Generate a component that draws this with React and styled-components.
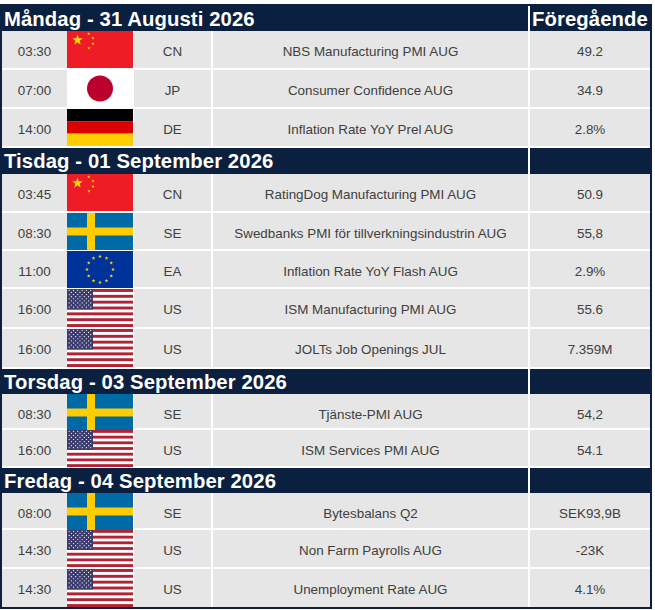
import React from 'react';
import styled, { createGlobalStyle } from 'styled-components';

const NAVY = '#0b1f3f';

const GlobalStyle = createGlobalStyle`
  body {
    margin: 0;
    background: #fff;
    font-family: "Liberation Sans", Arial, Helvetica, sans-serif;
  }
`;

const Page = styled.div`
  padding-top: 4px;
  width: 652px;
`;

const Table = styled.div`
  border: 2px solid ${NAVY};
  background: ${NAVY};
`;

const Section = styled.div`
  display: flex;
  flex-direction: column;

  &:last-child > div:last-child {
    border-bottom: 0;
  }
`;

const Header = styled.div`
  display: grid;
  grid-template-columns: 528px 120px;
  height: ${(p) => p.$h}px;
  background: ${NAVY};
  color: #fff;
  font-weight: bold;
  font-size: 20.3px;
  letter-spacing: 0.1px;
`;

const HeaderCell = styled.div`
  display: flex;
  align-items: center;
  padding: 1px 0 0 2px;
  border-right: ${(p) => (p.$divider ? '2px solid #fff' : '0')};
  white-space: nowrap;
`;

const Row = styled.div`
  display: grid;
  grid-template-columns: 65px 67px 79px 317px 120px;
  height: ${(p) => p.$h}px;
  box-sizing: border-box;
  border-bottom: 2px solid #fff;
  background: #e6e6e6;
  color: #404040;
  font-size: 13.4px;
`;

const Cell = styled.div`
  display: flex;
  align-items: center;
  justify-content: center;
  padding-top: 3px;
  border-right: ${(p) => p.$divider || 0}px solid #fff;
  white-space: nowrap;
`;

const FlagCell = styled.div`
  display: flex;
  border-right: 1px solid #fff;

  svg {
    display: block;
    width: 100%;
    height: 100%;
  }
`;

const star = (cx, cy, r) => {
  const pts = [];
  for (let i = 0; i < 10; i++) {
    const rad = i % 2 === 0 ? r : r * 0.4;
    const a = -Math.PI / 2 + (i * Math.PI) / 5;
    pts.push(`${(cx + rad * Math.cos(a)).toFixed(2)},${(cy + rad * Math.sin(a)).toFixed(2)}`);
  }
  return pts.join(' ');
};

const Svg = ({ children }) => (
  <svg viewBox="0 0 66 37" preserveAspectRatio="none">
    {children}
  </svg>
);

const flags = {
  CN: () => (
    <Svg>
      <rect width="66" height="37" fill="#ee1c25" />
      <polygon points={star(10.5, 9, 5.5)} fill="#ffde00" />
      <polygon points={star(21.7, 2.9, 1.7)} fill="#ffde00" />
      <polygon points={star(26, 7, 1.7)} fill="#ffde00" />
      <polygon points={star(26, 12.5, 1.7)} fill="#ffde00" />
      <polygon points={star(22, 17, 1.7)} fill="#ffde00" />
    </Svg>
  ),
  JP: () => (
    <Svg>
      <rect width="66" height="37" fill="#fff" />
      <circle cx="33" cy="18.5" r="13" fill="#bc002d" />
    </Svg>
  ),
  DE: () => (
    <Svg>
      <rect width="66" height="12.4" fill="#000" />
      <rect y="12.3" width="66" height="12.4" fill="#dd0000" />
      <rect y="24.6" width="66" height="12.4" fill="#ffce00" />
    </Svg>
  ),
  SE: () => (
    <Svg>
      <rect width="66" height="37" fill="#006aa7" />
      <rect x="20" width="8" height="37" fill="#fecc00" />
      <rect y="14.5" width="66" height="8" fill="#fecc00" />
    </Svg>
  ),
  EA: () => (
    <Svg>
      <rect width="66" height="37" fill="#003399" />
      {Array.from({ length: 12 }).map((_, i) => {
        const a = (i * Math.PI) / 6;
        return (
          <polygon
            key={i}
            points={star(33 + 13 * Math.sin(a), 18.5 - 13 * Math.cos(a), 2)}
            fill="#ffcc00"
          />
        );
      })}
    </Svg>
  ),
  US: () => {
    const sh = 37 / 13;
    const dots = [];
    for (let r = 0; r < 9; r++) {
      const n = r % 2 === 0 ? 6 : 5;
      for (let c = 0; c < n; c++) {
        const x = r % 2 === 0 ? 2.2 + c * 4.3 : 4.35 + c * 4.3;
        dots.push(<circle key={`${r}-${c}`} cx={x} cy={1.3 + r * 2.05} r="0.6" fill="#fff" />);
      }
    }
    return (
      <Svg>
        <rect width="66" height="37" fill="#fff" />
        {Array.from({ length: 7 }).map((_, i) => (
          <rect key={i} y={i * 2 * sh} width="66" height={sh} fill="#b22234" />
        ))}
        <rect width="26" height={sh * 7} fill="#3c3b6e" />
        {dots}
      </Svg>
    );
  },
};

const days = [
  {
    title: 'Måndag - 31 Augusti 2026',
    prev: 'Föregående',
    h: 25,
    rows: [
      ['03:30', 'CN', 'NBS Manufacturing PMI AUG', '49.2', 39],
      ['07:00', 'JP', 'Consumer Confidence AUG', '34.9', 39],
      ['14:00', 'DE', 'Inflation Rate YoY Prel AUG', '2.8%', 39],
    ],
  },
  {
    title: 'Tisdag - 01 September 2026',
    h: 26,
    rows: [
      ['03:45', 'CN', 'RatingDog Manufacturing PMI AUG', '50.9', 39],
      ['08:30', 'SE', 'Swedbanks PMI för tillverkningsindustrin AUG', '55,8', 38],
      ['11:00', 'EA', 'Inflation Rate YoY Flash AUG', '2.9%', 38],
      ['16:00', 'US', 'ISM Manufacturing PMI AUG', '55.6', 40],
      ['16:00', 'US', 'JOLTs Job Openings JUL', '7.359M', 40],
    ],
  },
  {
    title: 'Torsdag - 03 September 2026',
    h: 25,
    rows: [
      ['08:30', 'SE', 'Tjänste-PMI AUG', '54,2', 36],
      ['16:00', 'US', 'ISM Services PMI AUG', '54.1', 38],
    ],
  },
  {
    title: 'Fredag - 04 September 2026',
    h: 25,
    rows: [
      ['08:00', 'SE', 'Bytesbalans Q2', 'SEK93,9B', 37],
      ['14:30', 'US', 'Non Farm Payrolls AUG', '-23K', 39],
      ['14:30', 'US', 'Unemployment Rate AUG', '4.1%', 38],
    ],
  },
];

export default function App() {
  return (
    <Page>
      <GlobalStyle />
      <Table>
        {days.map((day) => (
          <Section key={day.title}>
            <Header $h={day.h}>
              <HeaderCell $divider>{day.title}</HeaderCell>
              <HeaderCell>{day.prev}</HeaderCell>
            </Header>
            {day.rows.map(([time, country, event, prev, h], i) => {
              const Flag = flags[country];
              return (
                <Row key={i} $h={h}>
                  <Cell>{time}</Cell>
                  <FlagCell>
                    <Flag />
                  </FlagCell>
                  <Cell $divider={2}>{country}</Cell>
                  <Cell $divider={2}>{event}</Cell>
                  <Cell>{prev}</Cell>
                </Row>
              );
            })}
          </Section>
        ))}
      </Table>
    </Page>
  );
}
